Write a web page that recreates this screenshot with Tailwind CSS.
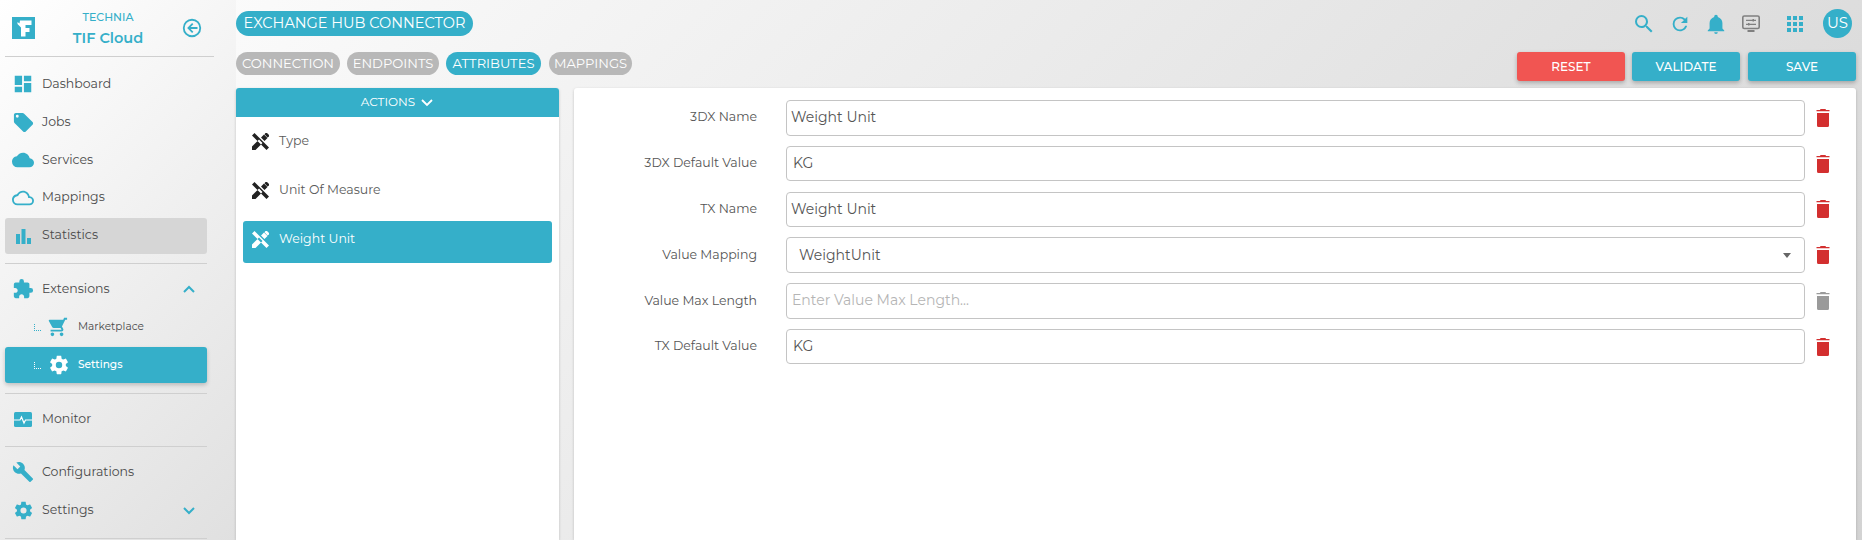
<!doctype html>
<html><head><meta charset="utf-8"><script src="https://cdn.jsdelivr.net/npm/@tailwindcss/browser@4"></script></head>
<body class="m-0">
<div class="flex h-[540px] w-[1862px] overflow-hidden bg-[linear-gradient(135deg,#ffffff_0%,#d3d3d3_100%)] font-['Montserrat','Lato','Liberation_Sans',sans-serif] text-[#4a4a4a]">
  <aside class="flex w-[236px] shrink-0 flex-col bg-[linear-gradient(135deg,#ffffff_0%,#e0e0e0_100%)] pl-[5px]">
    <div class="flex h-[57px] w-[209px] shrink-0 items-center border-b border-[#cfcfcf]">
      <svg class="ml-[7px] h-[22px] w-[23px] shrink-0" viewBox="0 0 23 22"><rect width="23" height="22" fill="#35afc9"/><path fill="#fff" d="M8 3.5H19.5V8H13.5V11H17.5V15H13.5V19.5H9V10.5L5.5 7V5L7.5 6.5z"/></svg>
      <div class="mt-[2px] ml-[23px] flex w-[100px] shrink-0 flex-col items-center text-[#35afc9]"><span class="text-[11px] leading-[18px] font-medium">TECHNIA</span><span class="text-[14.5px] leading-[25px] font-semibold">TIF Cloud</span></div>
      <svg class="ml-[23px] h-[22px] w-[22px] shrink-0" viewBox="0 0 24 24" fill="#35afc9"><path d="M12 2a10 10 0 1 0 0 20 10 10 0 0 0 0-20m0 18a8 8 0 1 1 0-16 8 8 0 0 1 0 16M18 11h-7.5l3-3-1.4-1.4L6.7 12l5.4 5.4 1.4-1.4-3-3H18z"/></svg>
    </div>
    <nav class="mt-[9px] flex w-[202px] flex-col gap-[2px] text-[12.5px]">
      <div class="flex h-9 items-center gap-[8px] pl-[7px]"><span class="flex w-[22px] justify-center"><svg class="h-[22px] w-[22px] shrink-0 text-[#35afc9]" fill="currentColor" viewBox="0 0 24 24"><path d="M13,3V9H21V3M13,21H21V11H13M3,21H11V15H3M3,13H11V3H3V13Z"/></svg></span><span>Dashboard</span></div>
      <div class="flex h-9 items-center gap-[8px] pl-[7px]"><span class="flex w-[22px] justify-center"><svg class="h-[23px] w-[23px] shrink-0 text-[#35afc9]" fill="currentColor" viewBox="0 0 24 24"><path d="M5.5,7A1.5,1.5 0 0,1 4,5.5A1.5,1.5 0 0,1 5.5,4A1.5,1.5 0 0,1 7,5.5A1.5,1.5 0 0,1 5.5,7M21.41,11.58L12.41,2.58C12.05,2.22 11.55,2 11,2H4C2.89,2 2,2.89 2,4V11C2,11.55 2.22,12.05 2.59,12.41L11.58,21.41C11.95,21.77 12.45,22 13,22C13.55,22 14.05,21.77 14.41,21.41L21.41,14.41C21.78,14.05 22,13.55 22,13C22,12.44 21.77,11.94 21.41,11.58Z"/></svg></span><span>Jobs</span></div>
      <div class="flex h-9 items-center gap-[8px] pl-[7px]"><span class="flex w-[22px] justify-center"><svg class="h-[22px] w-[22px] shrink-0 text-[#35afc9]" fill="currentColor" viewBox="0 0 24 24"><path d="M19.35,10.03C18.67,6.59 15.64,4 12,4C9.11,4 6.6,5.64 5.35,8.03C2.34,8.36 0,10.9 0,14A6,6 0 0,0 6,20H19A5,5 0 0,0 24,15C24,12.36 21.95,10.22 19.35,10.03Z"/></svg></span><span>Services</span></div>
      <div class="flex h-9 items-center gap-[8px] pl-[7px]"><span class="flex w-[22px] justify-center"><svg class="h-[22px] w-[22px] shrink-0 text-[#35afc9]" fill="currentColor" viewBox="0 0 24 24"><path d="M19.35,10.03C18.67,6.59 15.64,4 12,4C9.11,4 6.6,5.64 5.35,8.03C2.34,8.36 0,10.9 0,14A6,6 0 0,0 6,20H19A5,5 0 0,0 24,15C24,12.36 21.95,10.22 19.35,10.03M19,18H6A4,4 0 0,1 2,14C2,11.95 3.53,10.24 5.56,10.03L6.63,9.92L7.13,8.97C8.08,7.14 9.94,6 12,6C14.62,6 16.88,7.86 17.39,10.43L17.69,11.93L19.22,12.04C20.78,12.14 22,13.45 22,15A3,3 0 0,1 19,18Z"/></svg></span><span class="pb-[2px]">Mappings</span></div>
      <div class="flex h-9 items-center gap-[8px] rounded-[3px] bg-[#d6d6d6] pl-[7px]"><span class="flex w-[22px] justify-center"><svg class="h-[15px] w-[15px] shrink-0 text-[#35afc9]" fill="currentColor" viewBox="0 0 15 15"><path d="M0 5h4v10H0zM5.5 0h4v15h-4zM11 9h4v6h-4z"/></svg></span><span class="pb-[2px]">Statistics</span></div>
    </nav>
    <div class="mt-[9px] h-px w-[202px] bg-[#cfcfcf]"></div>
    <div class="mt-[7px] flex w-[202px] flex-col gap-[2px] text-[12.5px]">
      <div class="flex h-9 items-center gap-[8px] pl-[7px]"><span class="flex w-[22px] justify-center"><svg class="h-[22px] w-[22px] shrink-0 text-[#35afc9]" fill="currentColor" viewBox="0 0 24 24"><path d="M20.5,11H19V7C19,5.89 18.1,5 17,5H13V3.5A2.5,2.5 0 0,0 10.5,1A2.5,2.5 0 0,0 8,3.5V5H4A2,2 0 0,0 2,7V10.8H3.5C5,10.8 6.2,12 6.2,13.5C6.2,15 5,16.2 3.5,16.2H2V20A2,2 0 0,0 4,22H7.8V20.5C7.8,19 9,17.8 10.5,17.8C12,17.8 13.2,19 13.2,20.5V22H17A2,2 0 0,0 19,20V16H20.5A2.5,2.5 0 0,0 23,13.5A2.5,2.5 0 0,0 20.5,11Z"/></svg></span><span class="flex-1">Extensions</span><svg class="mr-[11px] h-[14px] w-[14px] text-[#35afc9]" fill="none" stroke="currentColor" stroke-width="2" viewBox="0 0 14 14"><path d="M2 10l5-5 5 5"/></svg></div>
      <div class="flex h-9 items-center pl-[29px] text-[10.6px]"><span class="h-[7px] w-[7px] border-b border-l border-dotted border-[#35afc9]"></span><svg class="ml-[5px] h-[22px] w-[22px] shrink-0 text-[#35afc9]" fill="currentColor" viewBox="0 0 24 24"><path transform="matrix(-1 0 0 1 24 0)" d="M17,18C15.89,18 15,18.89 15,20A2,2 0 0,0 17,22A2,2 0 0,0 19,20C19,18.89 18.1,18 17,18M1,2V4H3L6.6,11.59L5.24,14.04C5.09,14.32 5,14.65 5,15A2,2 0 0,0 7,17H19V15H7.42A0.25,0.25 0 0,1 7.17,14.75C7.17,14.7 7.18,14.66 7.2,14.63L8.1,13H15.55C16.3,13 16.96,12.58 17.3,11.97L20.88,5.5C20.95,5.34 21,5.17 21,5A1,1 0 0,0 20,4H5.21L4.27,2M7,18C5.89,18 5,18.89 5,20A2,2 0 0,0 7,22A2,2 0 0,0 9,20C9,18.89 8.1,18 7,18Z"/></svg><span class="ml-[10px]">Marketplace</span></div>
      <div class="flex h-9 items-center rounded-[3px] bg-[#35afc9] pl-[29px] text-[10.6px] text-white shadow-[0_2px_4px_rgba(0,0,0,0.2)]"><span class="h-[7px] w-[7px] border-b border-l border-dotted border-white"></span><svg class="ml-[7px] h-[22px] w-[22px] shrink-0" fill="currentColor" viewBox="0 0 24 24"><path d="M12,15.5A3.5,3.5 0 0,1 8.5,12A3.5,3.5 0 0,1 12,8.5A3.5,3.5 0 0,1 15.5,12A3.5,3.5 0 0,1 12,15.5M19.43,12.97C19.47,12.65 19.5,12.33 19.5,12C19.5,11.67 19.47,11.34 19.43,11L21.54,9.37C21.73,9.22 21.78,8.95 21.66,8.73L19.66,5.27C19.54,5.05 19.27,4.96 19.05,5.05L16.56,6.05C16.04,5.66 15.5,5.32 14.87,5.07L14.5,2.42C14.46,2.18 14.25,2 14,2H10C9.75,2 9.54,2.18 9.5,2.42L9.13,5.07C8.5,5.32 7.96,5.66 7.44,6.05L4.95,5.05C4.73,4.96 4.46,5.05 4.34,5.27L2.34,8.73C2.21,8.95 2.27,9.22 2.46,9.37L4.57,11C4.53,11.34 4.5,11.67 4.5,12C4.5,12.33 4.53,12.65 4.57,12.97L2.46,14.63C2.27,14.78 2.21,15.05 2.34,15.27L4.34,18.73C4.46,18.95 4.73,19.03 4.95,18.95L7.44,17.94C7.96,18.34 8.5,18.68 9.13,18.93L9.5,21.58C9.54,21.82 9.75,22 10,22H14C14.25,22 14.46,21.82 14.5,21.58L14.87,18.93C15.5,18.67 16.04,18.34 16.56,17.94L19.05,18.95C19.27,19.03 19.54,18.95 19.66,18.73L21.66,15.27C21.78,15.05 21.73,14.78 21.54,14.63L19.43,12.97Z"/></svg><span class="ml-[8px] font-medium">Settings</span></div>
    </div>
    <div class="mt-[10px] h-px w-[202px] bg-[#cfcfcf]"></div>
    <div class="mt-[7px] flex h-9 w-[202px] items-center gap-[8px] pl-[7px] text-[12.5px]"><span class="flex w-[22px] justify-center"><svg class="h-[15px] w-[18px] shrink-0" viewBox="0 0 18 15"><rect width="18" height="15" rx="1.5" fill="#35afc9"/><path d="M0 8h6l1.500-3 2.500 6 1.500-3H18" fill="none" stroke="#fff" stroke-width="1.2"/></svg></span><span>Monitor</span></div>
    <div class="mt-[9px] h-px w-[202px] bg-[#cfcfcf]"></div>
    <div class="mt-[7px] flex w-[202px] flex-col gap-[2px] text-[12.5px]">
      <div class="flex h-9 items-center gap-[8px] pl-[7px]"><span class="flex w-[22px] justify-center"><svg class="h-[22px] w-[22px] shrink-0 text-[#35afc9]" fill="currentColor" viewBox="0 0 24 24"><path d="M22.7,19L13.6,9.9C14.5,7.6 14,4.9 12.1,3C10.1,1 7.1,0.6 4.7,1.7L9,6L6,9L1.6,4.7C0.4,7.1 0.9,10.1 2.9,12.1C4.8,14 7.5,14.5 9.8,13.6L18.9,22.7C19.3,23.1 19.9,23.1 20.3,22.7L22.6,20.4C23.1,20 23.1,19.3 22.7,19Z"/></svg></span><span>Configurations</span></div>
      <div class="flex h-9 items-center gap-[8px] pl-[7px]"><span class="flex w-[22px] justify-center"><svg class="h-[21px] w-[21px] shrink-0 text-[#35afc9]" fill="currentColor" viewBox="0 0 24 24"><path d="M12,15.5A3.5,3.5 0 0,1 8.5,12A3.5,3.5 0 0,1 12,8.5A3.5,3.5 0 0,1 15.5,12A3.5,3.5 0 0,1 12,15.5M19.43,12.97C19.47,12.65 19.5,12.33 19.5,12C19.5,11.67 19.47,11.34 19.43,11L21.54,9.37C21.73,9.22 21.78,8.95 21.66,8.73L19.66,5.27C19.54,5.05 19.27,4.96 19.05,5.05L16.56,6.05C16.04,5.66 15.5,5.32 14.87,5.07L14.5,2.42C14.46,2.18 14.25,2 14,2H10C9.75,2 9.54,2.18 9.5,2.42L9.13,5.07C8.5,5.32 7.96,5.66 7.44,6.05L4.95,5.05C4.73,4.96 4.46,5.05 4.34,5.27L2.34,8.73C2.21,8.95 2.27,9.22 2.46,9.37L4.57,11C4.53,11.34 4.5,11.67 4.5,12C4.5,12.33 4.53,12.65 4.57,12.97L2.46,14.63C2.27,14.78 2.21,15.05 2.34,15.27L4.34,18.73C4.46,18.95 4.73,19.03 4.95,18.95L7.44,17.94C7.96,18.34 8.5,18.68 9.13,18.93L9.5,21.58C9.54,21.82 9.75,22 10,22H14C14.25,22 14.46,21.82 14.5,21.58L14.87,18.93C15.5,18.67 16.04,18.34 16.56,17.94L19.05,18.95C19.27,19.03 19.54,18.95 19.66,18.73L21.66,15.27C21.78,15.05 21.73,14.78 21.54,14.63L19.43,12.97Z"/></svg></span><span class="flex-1">Settings</span><svg class="mr-[11px] h-[14px] w-[14px] text-[#35afc9]" fill="none" stroke="currentColor" stroke-width="2" viewBox="0 0 14 14"><path d="M2 5l5 5 5-5"/></svg></div>
    </div>
    <div class="mt-[10px] h-px w-[202px] bg-[#cfcfcf]"></div>
  </aside>
  <main class="flex min-w-0 flex-1 flex-col pr-[6px]">
    <div class="flex h-[52px] shrink-0 items-start justify-between pt-[11px]">
      <span class="flex h-[25px] w-[237px] items-center justify-center rounded-full bg-[#35afc9] text-[14.5px] text-white">EXCHANGE HUB CONNECTOR</span>
      <div class="-mt-[2px] flex items-center text-[#35afc9]">
        <svg class="h-[24px] w-[24px]" fill="currentColor" viewBox="0 0 24 24"><path d="M9.5,3A6.5,6.5 0 0,1 16,9.5C16,11.11 15.41,12.59 14.44,13.73L14.71,14H15.5L20.5,19L19,20.5L14,15.5V14.71L13.73,14.44C12.59,15.41 11.11,16 9.5,16A6.5,6.5 0 0,1 3,9.5A6.5,6.5 0 0,1 9.5,3M9.5,5C7,5 5,7 5,9.5C5,12 7,14 9.5,14C12,14 14,12 14,9.5C14,7 12,5 9.5,5Z"/></svg>
        <svg class="ml-[13px] h-[22px] w-[22px]" fill="currentColor" viewBox="0 0 24 24"><path d="M17.65,6.35C16.2,4.9 14.21,4 12,4A8,8 0 0,0 4,12A8,8 0 0,0 12,20C15.73,20 18.84,17.45 19.73,14H17.65C16.83,16.33 14.61,18 12,18A6,6 0 0,1 6,12A6,6 0 0,1 12,6C13.66,6 15.14,6.69 16.22,7.78L13,11H20V4L17.65,6.35Z"/></svg>
        <svg class="ml-[14px] h-[22px] w-[22px]" fill="currentColor" viewBox="0 0 24 24"><path d="M21,19V20H3V19L5,17V11C5,7.9 7.03,5.17 10,4.29C10,4.19 10,4.1 10,4A2,2 0 0,1 12,2A2,2 0 0,1 14,4C14,4.1 14,4.19 14,4.29C16.97,5.17 19,7.9 19,11V17L21,19M14,21A2,2 0 0,1 12,23A2,2 0 0,1 10,21"/></svg>
        <svg class="ml-[14px] h-[20px] w-[20px]" viewBox="0 0 20 20"><rect x="1.8" y="2" width="16.4" height="12.5" rx="1.5" fill="none" stroke="#808080" stroke-width="1.6"/><path d="M5 6.3h10M5 10.3h10" stroke="#808080" stroke-width="1.2"/><path d="M11.5 5h1.5v2.6h-1.5zM7 9h1.5v2.6H7z" fill="#808080"/><path d="M6.5 16h7v2h-7z" fill="#808080"/></svg>
        <svg class="ml-[26px] h-[16px] w-[16px]" fill="currentColor" viewBox="0 0 16 16"><path d="M0 0h4v4H0zM6 0h4v4H6zM12 0h4v4h-4zM0 6h4v4H0zM6 6h4v4H6zM12 6h4v4h-4zM0 12h4v4H0zM6 12h4v4H6zM12 12h4v4h-4z"/></svg>
        <span class="mr-[4px] ml-[20px] flex h-[29px] w-[29px] items-center justify-center rounded-full bg-[#35afc9] text-[15px] text-white">US</span>
      </div>
    </div>
    <div class="flex h-[36px] shrink-0 items-start justify-between">
      <div class="flex gap-[7px] text-[13.1px] text-white">
        <span class="flex h-[23px] w-[104px] items-center justify-center rounded-full bg-[#b8b8b8]">CONNECTION</span>
        <span class="flex h-[23px] w-[92px] items-center justify-center rounded-full bg-[#b8b8b8]">ENDPOINTS</span>
        <span class="flex h-[23px] w-[95px] items-center justify-center rounded-full bg-[#35afc9]">ATTRIBUTES</span>
        <span class="ml-[1px] flex h-[23px] w-[83px] items-center justify-center rounded-full bg-[#b8b8b8]">MAPPINGS</span>
      </div>
      <div class="flex gap-[7px] text-[12px] font-medium text-white">
        <span class="flex h-[29px] w-[108px] items-center justify-center rounded-[3px] bg-[#f15552] shadow-[0_2px_4px_rgba(0,0,0,0.25)]">RESET</span>
        <span class="flex h-[29px] w-[108px] items-center justify-center rounded-[3px] bg-[#35afc9] shadow-[0_2px_4px_rgba(0,0,0,0.25)]">VALIDATE</span>
        <span class="ml-[1px] flex h-[29px] w-[108px] items-center justify-center rounded-[3px] bg-[#35afc9] shadow-[0_2px_4px_rgba(0,0,0,0.25)]">SAVE</span>
      </div>
    </div>
    <div class="flex min-h-0 flex-1 gap-[15px]">
      <section class="flex w-[323px] shrink-0 flex-col rounded-t-[3px] bg-white shadow-[0_1px_3px_rgba(0,0,0,0.2)]">
        <div class="flex h-[29px] shrink-0 items-center justify-center gap-[5px] rounded-t-[3px] bg-[#35afc9] pb-[1px] text-[12px] text-white">ACTIONS<svg class="h-[14px] w-[14px]" fill="none" stroke="currentColor" stroke-width="1.8" viewBox="0 0 14 14"><path d="M2 5l5 5 5-5"/></svg></div>
        <div class="flex flex-col gap-[7px] px-[7px] pt-[6px] text-[12.5px] text-[#5a5a5a]">
          <div class="flex h-[42px] items-center gap-[10px] pb-[5px] pl-[9px]"><svg class="h-[17px] w-[17px] shrink-0 text-[#222]" fill="currentColor" viewBox="0 0 17 17"><path d="M2.5 0L0 2.500 14.500 17 17 14.500zM0 13.500L7 6.500 10.500 10 3.500 17H0zM9 4.500L12 1.500 15.500 5 12.500 8zM13.500 0H15L17 2V3.500L15.500 4.500 12.500 1.200z"/></svg><span>Type</span></div>
          <div class="flex h-[42px] items-center gap-[10px] pb-[5px] pl-[9px]"><svg class="h-[17px] w-[17px] shrink-0 text-[#222]" fill="currentColor" viewBox="0 0 17 17"><path d="M2.5 0L0 2.500 14.500 17 17 14.500zM0 13.500L7 6.500 10.500 10 3.500 17H0zM9 4.500L12 1.500 15.500 5 12.500 8zM13.500 0H15L17 2V3.500L15.500 4.500 12.500 1.200z"/></svg><span>Unit Of Measure</span></div>
          <div class="flex h-[42px] items-center gap-[10px] rounded-[3px] bg-[#35afc9] pb-[5px] pl-[9px] text-white"><svg class="h-[17px] w-[17px] shrink-0" fill="currentColor" viewBox="0 0 17 17"><path d="M2.5 0L0 2.500 14.500 17 17 14.500zM0 13.500L7 6.500 10.500 10 3.500 17H0zM9 4.500L12 1.500 15.500 5 12.500 8zM13.500 0H15L17 2V3.500L15.500 4.500 12.500 1.200z"/></svg><span>Weight Unit</span></div>
        </div>
      </section>
      <section class="flex min-w-0 flex-1 flex-col gap-[10.3px] rounded-t-[3px] bg-white pt-[12px] text-[#555] shadow-[0_1px_3px_rgba(0,0,0,0.2)]">
        <div class="flex h-[35.5px] items-center text-[14px]"><span class="w-[183px] text-right text-[12.5px]">3DX Name</span><div class="ml-[29px] flex h-full w-[1019px] items-center rounded-[4px] border border-[#c4c4c4] pl-[4px]">Weight Unit</div><svg class="ml-[8px] h-[20px] w-[20px] text-[#d32f2f]" fill="currentColor" viewBox="0 0 20 20"><path d="M7.500 1h5l.5 1h3.500v1.300h-13V2H7zM4 5h12v12.500a1.500 1.500 0 0 1-1.500 1.500h-9A1.500 1.500 0 0 1 4 17.500z"/></svg></div>
        <div class="flex h-[35.5px] items-center text-[14px]"><span class="w-[183px] text-right text-[12.5px]">3DX Default Value</span><div class="ml-[29px] flex h-full w-[1019px] items-center rounded-[4px] border border-[#c4c4c4] pl-[6px]">KG</div><svg class="ml-[8px] h-[20px] w-[20px] text-[#d32f2f]" fill="currentColor" viewBox="0 0 20 20"><path d="M7.500 1h5l.5 1h3.500v1.300h-13V2H7zM4 5h12v12.500a1.500 1.500 0 0 1-1.500 1.500h-9A1.500 1.500 0 0 1 4 17.500z"/></svg></div>
        <div class="flex h-[35.5px] items-center text-[14px]"><span class="w-[183px] text-right text-[12.5px]">TX Name</span><div class="ml-[29px] flex h-full w-[1019px] items-center rounded-[4px] border border-[#c4c4c4] pl-[4px]">Weight Unit</div><svg class="ml-[8px] h-[20px] w-[20px] text-[#d32f2f]" fill="currentColor" viewBox="0 0 20 20"><path d="M7.500 1h5l.5 1h3.500v1.300h-13V2H7zM4 5h12v12.500a1.500 1.500 0 0 1-1.500 1.500h-9A1.500 1.500 0 0 1 4 17.500z"/></svg></div>
        <div class="flex h-[35.5px] items-center text-[14px]"><span class="w-[183px] text-right text-[12.5px]">Value Mapping</span><div class="ml-[29px] flex h-full w-[1019px] items-center justify-between rounded-[4px] border border-[#c4c4c4] pr-[13px] pl-[12px]">WeightUnit<span class="h-0 w-0 border-x-[4.5px] border-t-[5px] border-x-transparent border-t-[#666]"></span></div><svg class="ml-[8px] h-[20px] w-[20px] text-[#d32f2f]" fill="currentColor" viewBox="0 0 20 20"><path d="M7.500 1h5l.5 1h3.500v1.300h-13V2H7zM4 5h12v12.500a1.500 1.500 0 0 1-1.500 1.500h-9A1.500 1.500 0 0 1 4 17.500z"/></svg></div>
        <div class="flex h-[35.5px] items-center text-[14px]"><span class="w-[183px] text-right text-[12.5px]">Value Max Length</span><div class="ml-[29px] flex h-full w-[1019px] items-center rounded-[4px] border border-[#c4c4c4] pl-[5px] text-[#b5b5b5]">Enter Value Max Length...</div><svg class="ml-[8px] h-[20px] w-[20px] text-[#9a9a9a]" fill="currentColor" viewBox="0 0 20 20"><path d="M7.500 1h5l.5 1h3.500v1.300h-13V2H7zM4 5h12v12.500a1.500 1.500 0 0 1-1.500 1.500h-9A1.500 1.500 0 0 1 4 17.500z"/></svg></div>
        <div class="flex h-[35.5px] items-center text-[14px]"><span class="w-[183px] text-right text-[12.5px]">TX Default Value</span><div class="ml-[29px] flex h-full w-[1019px] items-center rounded-[4px] border border-[#c4c4c4] pl-[6px]">KG</div><svg class="ml-[8px] h-[20px] w-[20px] text-[#d32f2f]" fill="currentColor" viewBox="0 0 20 20"><path d="M7.500 1h5l.5 1h3.500v1.300h-13V2H7zM4 5h12v12.500a1.500 1.500 0 0 1-1.500 1.500h-9A1.500 1.500 0 0 1 4 17.500z"/></svg></div>
      </section>
    </div>
  </main>
</div>
</body></html>
